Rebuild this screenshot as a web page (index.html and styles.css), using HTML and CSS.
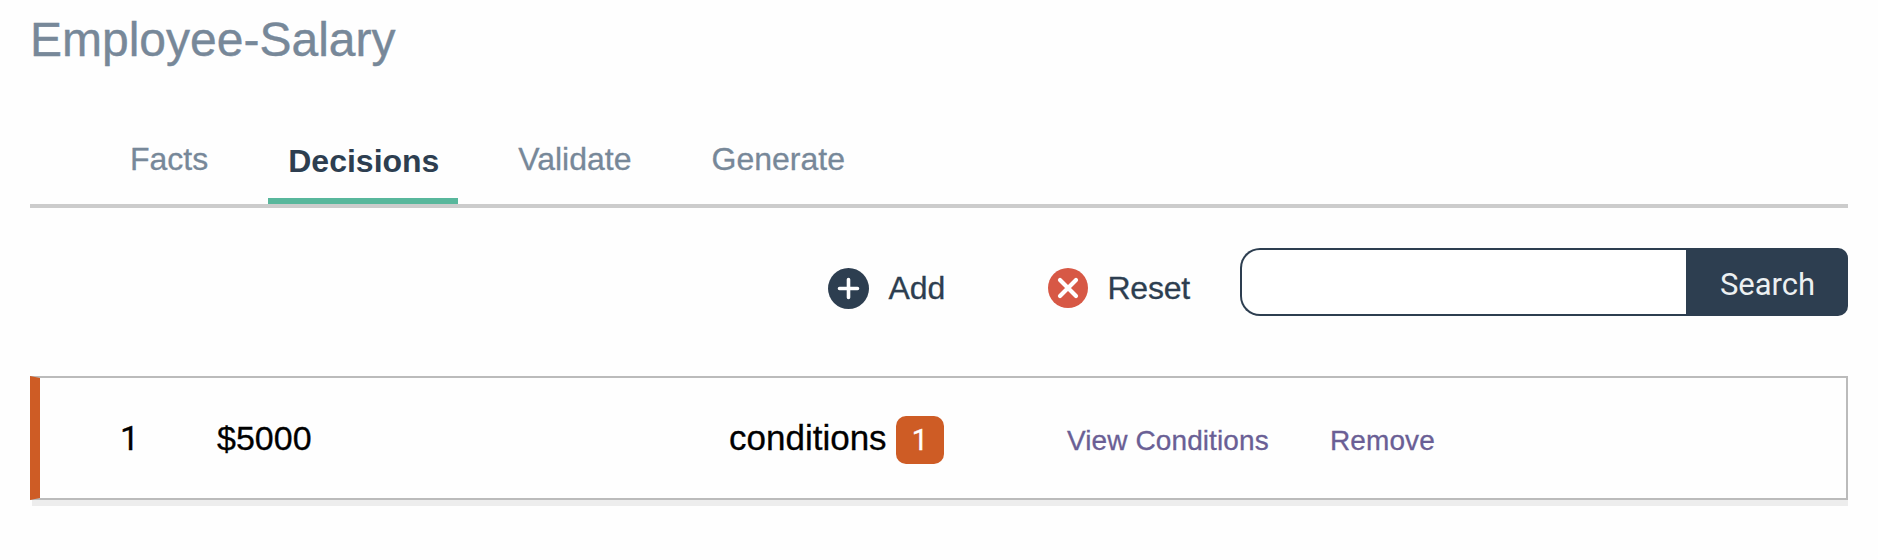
FILE: index.html
```html
<!DOCTYPE html>
<html lang="en">
<head>
<meta charset="utf-8">
<title>Employee-Salary</title>
<link rel="stylesheet" href="styles.css">
</head>
<body>
<main class="page">
  <h1 class="title">Employee-Salary</h1>
  <nav class="tabs">
    <a class="tab">Facts</a>
    <a class="tab active">Decisions</a>
    <a class="tab">Validate</a>
    <a class="tab">Generate</a>
  </nav>
  <div class="toolbar">
    <a class="action add">
      <svg class="icon-add" viewBox="0 0 41 41"><circle cx="20.5" cy="20.5" r="20.5" fill="#2d3e50"/><path d="M20.5 11.5v18M11.5 20.5h18" stroke="#fff" stroke-width="3.6" stroke-linecap="round"/></svg>
      <span>Add</span>
    </a>
    <a class="action reset">
      <svg class="icon-reset" viewBox="0 0 40 40"><circle cx="20" cy="20" r="20" fill="#d75845"/><path d="M12 12l16 16M28 12L12 28" stroke="#fff" stroke-width="4.2" stroke-linecap="round"/></svg>
      <span>Reset</span>
    </a>
    <form class="search">
      <input class="search-input" type="text" aria-label="Search">
      <button class="search-button" type="button">Search</button>
    </form>
  </div>
  <section class="decision">
    <span class="index">1</span>
    <span class="outcome">$5000</span>
    <span class="conditions">conditions</span>
    <span class="badge">1</span>
    <a class="link view">View Conditions</a>
    <a class="link remove">Remove</a>
  </section>
  <div class="decision-shade"></div>
</main>
</body>
</html>
```
FILE: styles.css
```css
* { box-sizing: border-box; }
body { margin: 0; background: #fefefe; font-family: "Liberation Sans", Arial, sans-serif; }
.page { padding: 0 30px; }
.title { margin: 0; padding-top: 12px; height: 132px; font-size: 48px; line-height: 56px; font-weight: 400; color: #778899; -webkit-text-stroke: .4px; }
.tabs { display: flex; height: 76px; padding-left: 80px; border-bottom: 4px solid #ccc; font-size: 32px; line-height: 36px; color: #778899; -webkit-text-stroke: .3px; }
.tab { height: 72px; padding: 9px 20px 0; margin-right: 40px; }
.active { width: 190px; padding-top: 11px; font-weight: 700; color: #2d3e50; border-bottom: 6px solid #58b79c; -webkit-text-stroke: 0; }
.toolbar { display: flex; justify-content: flex-end; height: 108px; padding-top: 40px; }
.action { display: flex; align-items: center; height: 68px; padding-top: 12px; font-size: 32px; color: #2d3e50; -webkit-text-stroke: .3px; }
.icon-add { width: 41px; height: 41px; margin-right: 19px; }
.icon-reset { width: 40px; height: 40px; margin-right: 19px; }
.add { margin-right: 103px; }
.reset { margin-right: 50px; letter-spacing: -.2px; }
.search { display: flex; width: 608px; height: 68px; }
.search-input { width: 446px; border: 2px solid #2d3e50; border-right: 0; border-radius: 20px 0 0 20px; background: #fff; }
.search-button { width: 162px; border: 0; padding: 4px 0 0 1px; border-radius: 0 10px 10px 0; background: #2d3e50; color: #ecf0f1; font: 31px Roboto, sans-serif; }
.decision { display: flex; align-items: baseline; height: 124px; margin-top: 60px; padding: 42px 0 0 80px; border: 2px solid #bbb; border-left: 10px solid #ce5c25; font-size: 34px; line-height: 36px; color: #000; background: #fefefe; -webkit-text-stroke: .3px; }
.decision-shade { height: 6px; margin-left: 2px; background: #ededed; }
.index { width: 97px; font-family: Roboto, sans-serif; }
.outcome { width: 512px; }
.conditions { width: 167px; font-size: 35px; }
.badge { align-self: flex-start; width: 48px; height: 48px; margin: -4px 123px 0 0; border-radius: 10px; background: #ce5c25; color: #fff; font: 29px/48px Roboto, sans-serif; text-align: center; }
.link { font-size: 28px; letter-spacing: .1px; color: #6a5f95; }
.view { width: 263px; }
```
